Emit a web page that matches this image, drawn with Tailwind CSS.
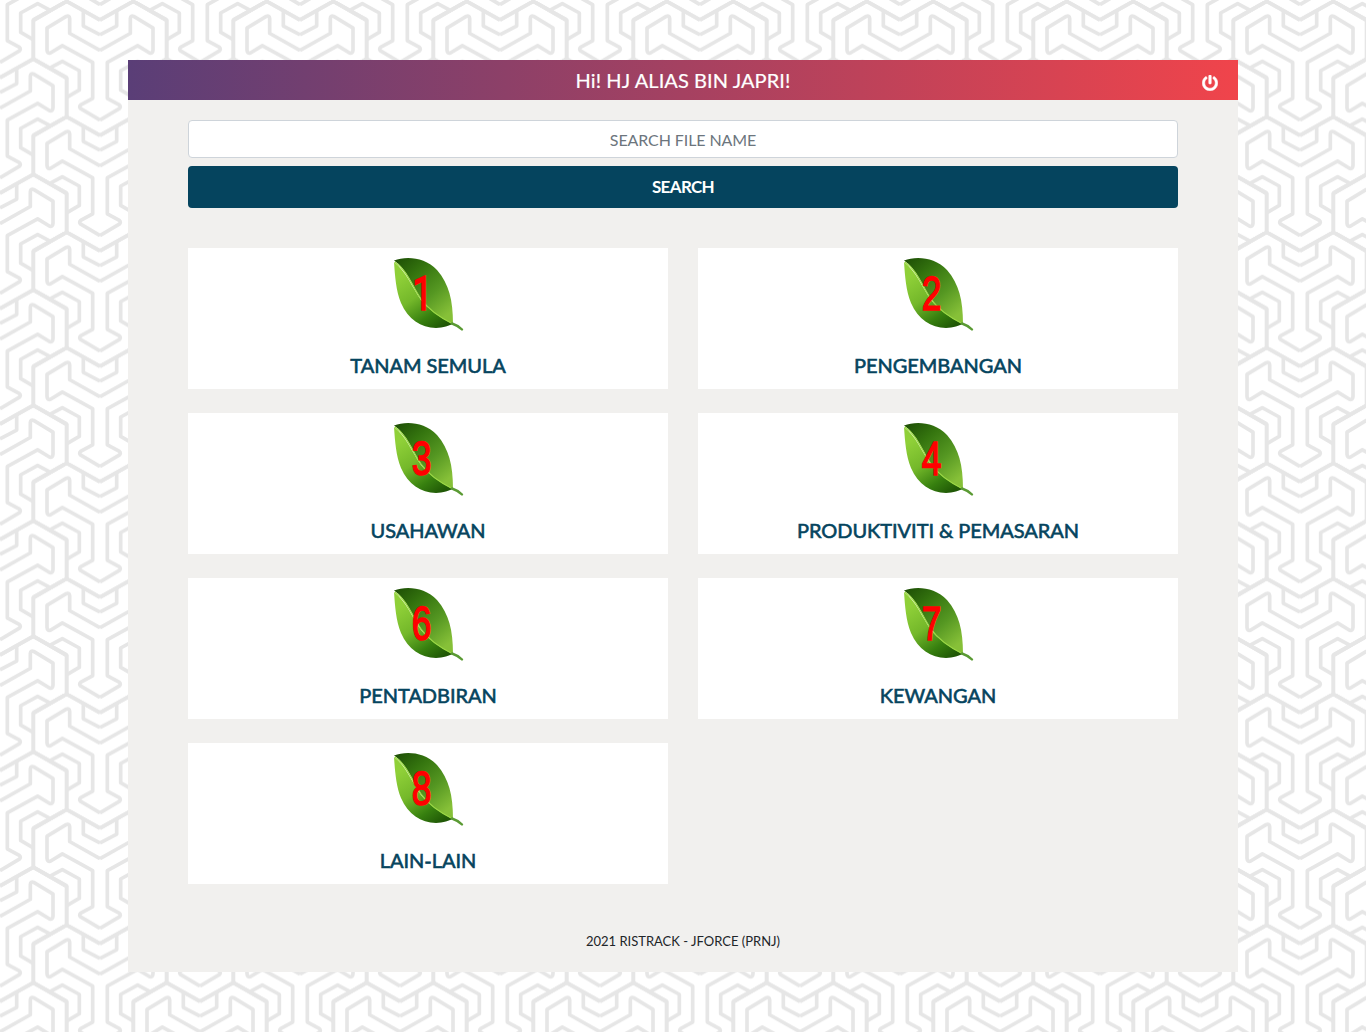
<!DOCTYPE html>
<html lang="ms">
<head>
<meta charset="utf-8">
<title>RISTRACK</title>
<script src="https://cdn.jsdelivr.net/npm/@tailwindcss/browser@4"></script>
</head>
<body class="relative min-h-screen bg-white font-['Lato',sans-serif] text-[#212529]">
<svg class="absolute inset-0 -z-10 h-full w-full" aria-hidden="true">
  <defs>
    <g id="half" fill="none" stroke="#e6e6e6" stroke-width="11" stroke-linejoin="round">
      <path d="M0 60L-100 4L-200 60V177L-100 235V350L0 406M-100 350L-200 406"/>
      <path d="M-50 32V78L0 104"/>
      <path d="M0 151L-91 100V55Q-92 46 -101 49L-159 84V150Q-158 161 -149 159L-113 137L-22 187V295L-58 315Q-64 320 -58 326L0 360"/>
      <path d="M-148 203L-113 184L-62 212V270L-100 292"/>
    </g>
    <g id="motif"><use href="#half"/><use href="#half" transform="scale(-1 1)"/></g>
    <pattern id="weave" width="600" height="346.4" patternUnits="userSpaceOnUse" patternTransform="scale(.33333)">
      <use href="#motif" x="300" y="0"/><use href="#motif" x="300" y="-346.4"/>
      <use href="#motif" x="0" y="173.2"/><use href="#motif" x="0" y="-173.2"/>
      <use href="#motif" x="600" y="173.2"/><use href="#motif" x="600" y="-173.2"/>
    </pattern>
  </defs>
  <rect width="100%" height="100%" fill="url(#weave)"/>
</svg>
<svg class="absolute h-0 w-0" aria-hidden="true">
  <defs>
    <linearGradient id="top" gradientUnits="userSpaceOnUse" x1="20" y1="10" x2="68" y2="66">
      <stop offset="0" stop-color="#1f5206"/><stop offset=".3" stop-color="#35750f"/><stop offset=".65" stop-color="#559722"/><stop offset="1" stop-color="#86c038"/>
    </linearGradient>
    <linearGradient id="low" gradientUnits="userSpaceOnUse" x1="18" y1="30" x2="54" y2="84">
      <stop offset="0" stop-color="#8fd038"/><stop offset=".4" stop-color="#74b82a"/><stop offset=".75" stop-color="#37800f"/><stop offset="1" stop-color="#205806"/>
    </linearGradient>
    <g id="leaf">
      <path d="M14 14C15 28 16 43 21 55C28 71 41 80 56 80C63 80 70 77 73 76C60 69 47 60 41 52C32 39 26 23 14 14Z" fill="url(#low)"/>
      <path d="M14 12.5C26 8 45 9 57 22C69 36 73 52 73 76C62 71 48 62 41 51C33 39 27 21 14 12.5Z" fill="url(#top)"/>
      <path d="M15 14C27 22 32 38 41 51C48 61 61 70 73 76" fill="none" stroke="#9bd845" stroke-width="1.3"/>
      <path d="M72 75.5Q78 77.5 82 81.5" fill="none" stroke="#5a9a33" stroke-width="2.4" stroke-linecap="round"/>
    </g>
  </defs>
</svg>
<div class="px-32 pt-[60px]">
  <main class="h-[912px] bg-[#f1f0ee]">
    <header class="flex h-10 items-center bg-[linear-gradient(to_right,#5a3e77,#f0444b)] px-5 text-white">
      <span class="w-4"></span>
      <h1 class="flex-1 text-center text-xl tracking-[0.07px] [-webkit-text-stroke:0.2px]">Hi! HJ ALIAS BIN JAPRI!</h1>
      <svg class="mt-1.5 h-4 w-4" viewBox="0 0 512 512" fill="currentColor" stroke="currentColor" stroke-width="16"><path d="M400 54.1c63 45 104 118.6 104 201.9 0 136.8-110.8 247.7-247.5 248C120 504.3 8.2 393 8 256.4 7.9 173.1 48.9 99.3 111.8 54.2c11.7-8.3 28-4.8 35 7.7L162.6 90c5.9 10.5 3.1 23.8-6.6 31-41.5 30.8-68 79.6-68 134.9-.1 92.3 74.5 168.1 168 168.1 91.6 0 168.6-74.2 168-169.1-.3-51.8-24.7-101.8-68.1-134-9.7-7.2-12.4-20.5-6.5-30.9l15.8-28.1c7-12.4 23.2-16.1 34.8-7.8zM296 264V24c0-13.3-10.7-24-24-24h-32c-13.3 0-24 10.7-24 24v240c0 13.3 10.7 24 24 24h32c13.3 0 24-10.7 24-24z"/></svg>
    </header>
    <div class="px-[60px] pt-5">
      <input class="block h-[38px] w-full rounded border border-[#ced4da] bg-white text-center text-base tracking-[-0.1px] placeholder:text-[#6c757d]" placeholder="SEARCH FILE NAME">
      <button class="mt-2 block h-[42px] w-full rounded bg-[#05445e] text-[17px] font-bold tracking-[-0.65px] text-white">SEARCH</button>
      <div class="mt-10 grid grid-cols-2 gap-x-[30px] gap-y-6 text-center text-xl tracking-[-0.05px] text-[#05445e] [-webkit-text-stroke:0.6px]">
        <a class="flex h-[141px] flex-col items-center bg-white"><svg class="h-[100px] w-24" viewBox="0 0 96 100"><use href="#leaf"/><text transform="translate(42.3 62) scale(.74 1)" text-anchor="middle" class="fill-[#ff0000] stroke-[#ff0000] stroke-[1.6] font-['Roboto',sans-serif] text-[49px]">1</text></svg><span class="mt-[3px]">TANAM SEMULA</span></a>
        <a class="flex h-[141px] flex-col items-center bg-white"><svg class="h-[100px] w-24" viewBox="0 0 96 100"><use href="#leaf"/><text transform="translate(41.5 62) scale(.74 1)" text-anchor="middle" class="fill-[#ff0000] stroke-[#ff0000] stroke-[1.6] font-['Liberation_Sans',sans-serif] text-[48px]">2</text></svg><span class="mt-[3px]">PENGEMBANGAN</span></a>
        <a class="flex h-[141px] flex-col items-center bg-white"><svg class="h-[100px] w-24" viewBox="0 0 96 100"><use href="#leaf"/><text transform="translate(41.5 62) scale(.74 1)" text-anchor="middle" class="fill-[#ff0000] stroke-[#ff0000] stroke-[1.6] font-['Liberation_Sans',sans-serif] text-[48px]">3</text></svg><span class="mt-[3px]">USAHAWAN</span></a>
        <a class="flex h-[141px] flex-col items-center bg-white"><svg class="h-[100px] w-24" viewBox="0 0 96 100"><use href="#leaf"/><text transform="translate(41.5 62) scale(.74 1)" text-anchor="middle" class="fill-[#ff0000] stroke-[#ff0000] stroke-[1.6] font-['Liberation_Sans',sans-serif] text-[48px]">4</text></svg><span class="mt-[3px]">PRODUKTIVITI &amp; PEMASARAN</span></a>
        <a class="flex h-[141px] flex-col items-center bg-white"><svg class="h-[100px] w-24" viewBox="0 0 96 100"><use href="#leaf"/><text transform="translate(41.5 62) scale(.74 1)" text-anchor="middle" class="fill-[#ff0000] stroke-[#ff0000] stroke-[1.6] font-['Liberation_Sans',sans-serif] text-[48px]">6</text></svg><span class="mt-[3px]">PENTADBIRAN</span></a>
        <a class="flex h-[141px] flex-col items-center bg-white"><svg class="h-[100px] w-24" viewBox="0 0 96 100"><use href="#leaf"/><text transform="translate(41.5 62) scale(.74 1)" text-anchor="middle" class="fill-[#ff0000] stroke-[#ff0000] stroke-[1.6] font-['Liberation_Sans',sans-serif] text-[48px]">7</text></svg><span class="mt-[3px]">KEWANGAN</span></a>
        <a class="flex h-[141px] flex-col items-center bg-white"><svg class="h-[100px] w-24" viewBox="0 0 96 100"><use href="#leaf"/><text transform="translate(41.5 62) scale(.74 1)" text-anchor="middle" class="fill-[#ff0000] stroke-[#ff0000] stroke-[1.6] font-['Liberation_Sans',sans-serif] text-[48px]">8</text></svg><span class="mt-[3px]">LAIN-LAIN</span></a>
      </div>
      <footer class="mt-12 text-center text-[13px] leading-[18px] text-[#212529]">2021 RISTRACK - JFORCE (PRNJ)</footer>
    </div>
  </main>
</div>
</body>
</html>
